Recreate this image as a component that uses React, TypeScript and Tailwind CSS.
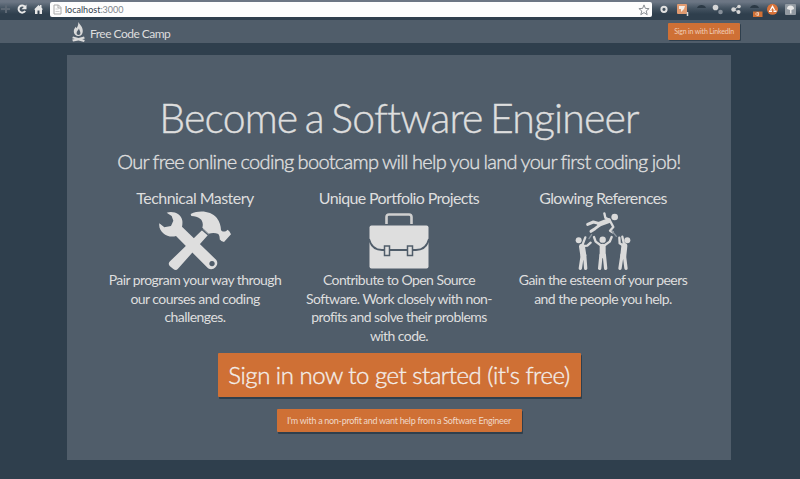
import type { ReactNode } from "react";

function BrowserBar() {
  return (
    <div className="flex h-5 shrink-0 items-start bg-linear-to-b from-[#6c7684] from-10% via-[#465563] via-40% to-[#2f3f4d] to-70%">
      <svg className="h-5 w-[50px]" viewBox="0 0 50 20" fill="none">
        <path d="M1 9h9M6 5v8" stroke="#5d6874" strokeWidth="2" />
        <path d="M25 6.800A3.600 3.600 0 1 0 25.200 11" stroke="#e8e8e8" strokeWidth="2" />
        <path d="M26.500 4.500v4.800h-5z" fill="#e8e8e8" />
        <path d="M34 9.500 38.500 5l1.500 1.300V5h1.500v2.500l1.500 2h-1V14h-2.500v-3.500h-2V14H35V9.500z" fill="#e8e8e8" />
      </svg>
      <div className="mt-[2px] flex h-[15px] w-[602px] items-center rounded-[2px] bg-[#fdfdfd]">
        <svg className="ml-[3px] h-[11px] w-[9px]" viewBox="0 0 9 11" fill="none" stroke="#a9a9a9">
          <path d="M1 1h4.500L8 3.500V10H1zM5 1v3h3" />
          <path d="M2.500 5h3M2.500 7.500h4" stroke="#d0d0d0" />
        </svg>
        <span className="ml-[3px] whitespace-nowrap text-[9px] leading-[15px] text-[#7d858c]">
          <span className="text-[#35424d]">localhost</span>:3000
        </span>
        <svg className="mr-[2px] ml-auto h-3 w-3" viewBox="0 0 12 12" fill="none" stroke="#8a8f94">
          <path d="m6 .9 1.400 3.500 3.700.2-2.900 2.400 1 3.700L6 8.600l-3.200 2.100 1-3.700L.9 4.600l3.700-.2z" />
        </svg>
      </div>
      <svg className="h-5 w-[148px]" viewBox="652 0 148 20" fill="none">
        <circle cx="664" cy="9.300" r="2.600" stroke="#e0e0e0" strokeWidth="2" />
        <rect x="677" y="4" width="10" height="10" rx="1" fill="#e09a70" />
        <path d="M679 6h6l-1 3-3 3v-3h-2z" fill="#f5eee8" />
        <path d="M687.500 12v4" stroke="#d8d8d8" strokeWidth="1.500" />
        <path d="M697 8c1-4 8-4 9 0z" fill="#2b3945" />
        <circle cx="715.500" cy="7.500" r="2.800" fill="#d6d6d6" />
        <circle cx="720.500" cy="12" r="2.300" fill="#87909a" />
        <path d="m739 6-5 3.500 5 3" stroke="#c8c8c8" />
        <g fill="#d6d6d6"><circle cx="733.500" cy="9.500" r="2.200" /><circle cx="739" cy="6.500" r="1.800" /><circle cx="738.500" cy="12" r="2" /></g>
        <path d="M750 8c1-4 8-4 9 0z" fill="#2b3945" />
        <rect x="753" y="11.500" width="9.500" height="5.500" fill="#cf7035" />
        <path d="M756.500 12.500h2v3h-2m-1.500-1.500h4" stroke="#f0d5c5" strokeWidth=".8" />
        <circle cx="772.500" cy="9.300" r="5.500" fill="#d8733a" />
        <path d="m770.500 10 2-3.500 2 3.500M769 11.300h3m1.500 0h3" stroke="#fff" strokeWidth="1.400" />
        <rect x="785" y="4" width="11" height="11" rx="1" fill="#929aa2" />
        <path d="M787 9a3.500 3.500 0 0 1 7 0l-2.500 1v3.500H790V10z" fill="#e8e8e8" />
      </svg>
    </div>
  );
}

function Campfire() {
  return (
    <svg className="h-[20px] w-[13px]" viewBox="0 0 13 20" fill="#dadada">
      <path fillRule="evenodd" d="M6.200 0C8 2.500 10.800 5 10.800 9c0 3-1.700 5-4.300 5s-4.700-2-4.700-4.800c0-2 1-3.200 2-4.400l.8 1.500C5.800 4.400 6.600 2.500 6.200 0zM7 6.500c-.8 2-2.400 2.700-2.400 4.500 0 1.200.8 2 1.900 2s1.900-.8 1.900-2C8.400 9.300 7.200 8.500 7 6.500z" />
      <path d="M1 14.500 6.500 16l5.500-1.500.8 2-2.600.8 2.600.7-.8 2-5.500-1.500L1 19.500l-.8-2 2.600-.5-2.600-.8z" />
    </svg>
  );
}

function Tools() {
  return (
    <svg className="h-[61px] w-[74px]" viewBox="54 30 222 183" fill="#dedede">
      <path d="M189 88 206 103 114 206Q108 213 100 207L89 198Q83 191 90 184z" />
      <path fillRule="evenodd" d="M80 38C100 31 124 42 127 62Q128 72 126 80L229 180C239 195 221 215 204 205L108 108C84 116 54 96 58 70L73 82 93 78 100 62 95 48zM216 183a8 8 0 1 0 .1 0z" />
      <path d="M152 42C180 29 213 34 230 53Q242 69 243 90C247 97 257 96 263 89Q269 93 273 103L252 126Q244 126 239 118 240 108 235 102 222 96 206 101L187 83C193 62 180 49 154 48z" />
      <path d="m183 86 22 19" stroke="#505d6a" strokeWidth="4" />
    </svg>
  );
}

function Briefcase() {
  return (
    <svg className="h-[60px] w-[60px]" viewBox="0 -1 60 60">
      <path d="M17.500 12V5q0-2.500 2.500-2.500h20q2.500 0 2.500 2.500v7" fill="none" stroke="#d0d0d0" strokeWidth="2.600" />
      <rect x=".5" y="13.500" width="59" height="43" rx="2" fill="#dedede" />
      <path d="M0 27C2 35 7 38 13 38h34c6 0 11-3 13-11" fill="none" stroke="#505d6a" strokeWidth="1.800" />
      <rect x="15.500" y="34" width="5" height="9.500" fill="#dedede" stroke="#505d6a" strokeWidth="1.500" />
      <rect x="38.500" y="34" width="5" height="9.500" fill="#dedede" stroke="#505d6a" strokeWidth="1.500" />
    </svg>
  );
}

function Cheering() {
  return (
    <svg className="h-[61px] w-[58px]" viewBox="72 30 174 183" fill="none" stroke="#dadada" strokeLinecap="round" strokeLinejoin="round">
      <g fill="#dadada" stroke="none">
        <circle cx="194" cy="51" r="10" /><circle cx="86" cy="121" r="9" />
        <circle cx="158" cy="119" r="9.500" /><circle cx="232" cy="121" r="9" />
      </g>
      <path d="m176 62-27 10" strokeWidth="15" />
      <path d="m174 58-8-5-3-13M182 66l8 15-10 11 8 5" strokeWidth="7" />
      <path d="m146 70-16-4-17 7M148 76l-13 10-12 8" strokeWidth="9" />
      <path d="m186 93 13 16M125 104l-8 12" stroke="#8c959e" strokeWidth="4" />
      <path d="m96 140 4 26M158 140v26M223 138l-3 28" strokeWidth="18" />
      <path d="m97 165-6 40M104 165l3 40M153 165l-4 40M163 165l4 40M216 165l-6 40M223 165l5 40" strokeWidth="10" />
      <path d="m98 138 14-1 10-9M98 133l8-21M151 135l-14-10-5-14M165 135l14-10 6-14M222 138l-13-8-1-17M222 132l-5-22" strokeWidth="7" />
    </svg>
  );
}

function Feature({ title, titleClass, icon, children }: { title: string; titleClass: string; icon: ReactNode; children: ReactNode }) {
  return (
    <div className="flex w-[204px] flex-col items-center whitespace-nowrap">
      <h3 className={`text-[16px] leading-5 ${titleClass}`}>{title}</h3>
      <div className="mt-[2px] flex h-[61px] items-end">{icon}</div>
      <div className="text-center text-[14px] leading-[18.700px] tracking-[-0.560px]">{children}</div>
    </div>
  );
}

export default function App() {
  return (
    <div className="flex h-[479px] w-[800px] flex-col overflow-hidden bg-[#2f3f4d] font-['Lato','Liberation_Sans',sans-serif] text-[#dedede]">
      <BrowserBar />
      <nav className="flex h-[23px] shrink-0 items-center bg-[#505d6a]">
        <div className="ml-[72px] pt-[1px]"><Campfire /></div>
        <span className="mt-[4px] ml-[5px] whitespace-nowrap text-[12px] leading-4 tracking-[-0.520px]">Free Code Camp</span>
        <button className="mr-[60px] ml-auto h-[17px] w-[72px] rounded-[1px] bg-[#cf7035] text-center text-[7px] leading-[17px] tracking-[-0.170px] whitespace-nowrap text-[#f0cdb8] shadow-[1px_1px_0_#2f3f4d]">Sign in with LinkedIn</button>
      </nav>
      <main className="mt-3 ml-[67px] flex h-[405px] w-[664px] shrink-0 flex-col items-center bg-[#505d6a] whitespace-nowrap">
        <h1 className="mt-[38px] text-[41px] leading-[50px] font-light tracking-[-0.850px] [word-spacing:-2.800px] [-webkit-text-stroke:0.4px_#dedede]">Become a Software Engineer</h1>
        <h2 className="mt-[5px] text-[20px] leading-[26px] font-light tracking-[-0.680px] [word-spacing:-0.700px] [-webkit-text-stroke:0.4px_#dedede]">Our free online coding bootcamp will help you land your first coding job!</h2>
        <div className="mt-[14px] flex">
          <Feature title="Technical Mastery" titleClass="tracking-[-0.530px]" icon={<Tools />}>Pair program your way through<br />our courses and coding<br />challenges.</Feature>
          <Feature title="Unique Portfolio Projects" titleClass="tracking-[-0.640px]" icon={<Briefcase />}>Contribute to Open Source<br />Software. Work closely with non-<br />profits and solve their problems<br />with code.</Feature>
          <Feature title="Glowing References" titleClass="tracking-[-0.660px]" icon={<Cheering />}>Gain the esteem of your peers<br />and the people you help.</Feature>
        </div>
        <button className="mt-[7px] h-[44px] w-[363px] rounded-[1px] bg-[#cf7035] text-[24px] leading-[44px] font-light tracking-[-0.490px] text-[#f3eeea] shadow-[1px_2px_0_#2f3f4d] [-webkit-text-stroke:0.350px_#f3eeea]">Sign in now to get started (it's free)</button>
        <button className="mt-[12px] h-[23px] w-[245px] rounded-[1px] bg-[#cf7035] text-[9px] leading-[23px] tracking-[-0.290px] text-[#f0d8c8] shadow-[1px_2px_0_#2f3f4d]">I'm with a non-profit and want help from a Software Engineer</button>
      </main>
    </div>
  );
}
